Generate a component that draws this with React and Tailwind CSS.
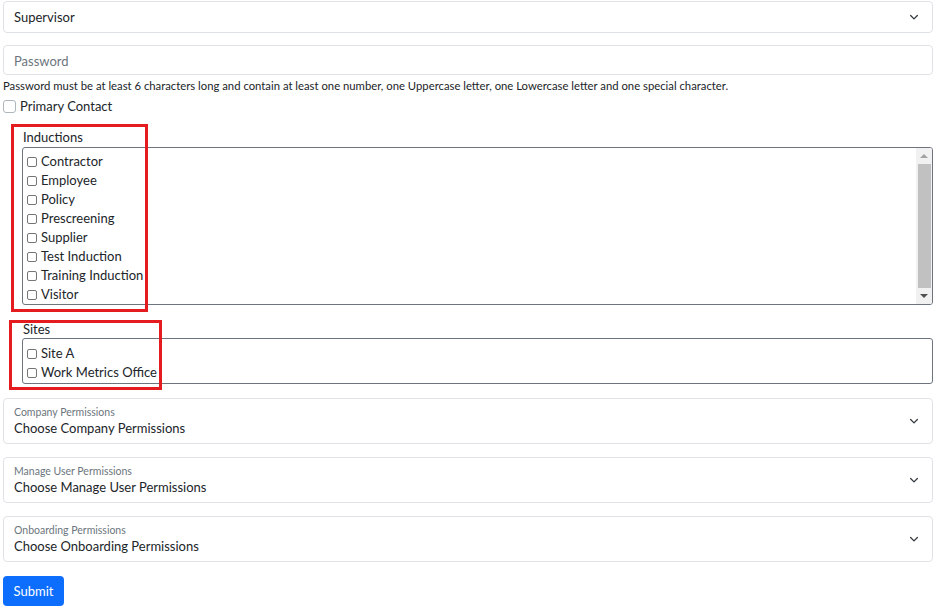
import React from "react";

const Chevron = () => (
  <svg width="12" height="12" viewBox="0 0 16 16" fill="none" stroke="#343a40" strokeWidth="1.7" strokeLinecap="round" strokeLinejoin="round">
    <path d="M3.5 6l4.5 4.5 4.5-4.5" />
  </svg>
);

const SmallBox = () => (
  <span className="inline-block w-[10px] h-[10px] border border-[#767676] rounded-[2px] bg-white mr-[4px] shrink-0" />
);

const CheckRow = ({ label }) => (
  <div className="flex items-center h-[19px] text-[13px] text-[#212529]">
    <SmallBox />
    <span>{label}</span>
  </div>
);

const PermSelect = ({ small, main, extra }) => (
  <div className={`h-[46px] border border-[#dee2e6] rounded-[4px] flex items-center justify-between pl-[10px] pr-[12px] ${extra}`}>
    <div className="flex flex-col">
      <span className="text-[10.5px] leading-[14px] text-[#6c757d]">{small}</span>
      <span className="text-[13px] leading-[18px] text-[#212529]">{main}</span>
    </div>
    <Chevron />
  </div>
);

export default function App() {
  const inductions = ["Contractor", "Employee", "Policy", "Prescreening", "Supplier", "Test Induction", "Training Induction", "Visitor"];
  return (
    <div className="relative w-[941px] h-[609px] bg-white px-[3px] pr-[8px] overflow-hidden" style={{ fontFamily: 'Lato, sans-serif' }}>
      <div className="pt-[1px]">
        <div className="h-[32px] border border-[#dee2e6] rounded-[4px] flex items-center justify-between pl-[10px] pr-[12px] text-[13px] text-[#212529]">
          <span className="pt-[2px]">Supervisor</span>
          <Chevron />
        </div>
        <div className="mt-[12px] h-[30px] border border-[#dee2e6] rounded-[4px] flex items-center pl-[10px] pt-[3px] text-[13px] text-[#6c757d]">
          Password
        </div>
        <div className="mt-[3px] text-[11.3px] leading-[16px] text-[#212529]">
          Password must be at least 6 characters long and contain at least one number, one Uppercase letter, one Lowercase letter and one special character.
        </div>
        <div className="mt-[2px] h-[20px] flex items-center text-[13px] text-[#212529]">
          <span className="inline-block w-[13px] h-[13px] border border-[#adb5bd] rounded-[3px] bg-white mr-[4px]" />
          <span className="pt-[1px]">Primary Contact</span>
        </div>

        <div className="ml-[20px] mt-[12px] h-[18px] leading-[18px] text-[13px] text-[#212529]">Inductions</div>
        <div className="ml-[19px] mt-[1px] h-[158px] border border-[#6c757d] rounded-[3px] flex overflow-hidden">
          <div className="flex-1 pl-[4px] pt-[4px]">
            {inductions.map((i) => (
              <CheckRow key={i} label={i} />
            ))}
          </div>
          <div className="w-[16px] bg-[#f1f1f1] flex flex-col items-center">
            <div className="h-[16px] flex items-center justify-center">
              <span className="w-0 h-0 border-l-[4px] border-r-[4px] border-b-[4px] border-l-transparent border-r-transparent border-b-[#a3a3a3]" />
            </div>
            <div className="w-[13px] flex-1 bg-[#c1c1c1]" />
            <div className="h-[16px] flex items-center justify-center">
              <span className="w-0 h-0 border-l-[4px] border-r-[4px] border-t-[4px] border-l-transparent border-r-transparent border-t-[#505050]" />
            </div>
          </div>
        </div>

        <div className="ml-[20px] mt-[15px] h-[18px] leading-[18px] text-[13px] text-[#212529]">Sites</div>
        <div className="ml-[19px] h-[46px] border border-[#6c757d] rounded-[3px] pl-[4px] pt-[5px]">
          <CheckRow label="Site A" />
          <CheckRow label="Work Metrics Office" />
        </div>

        <PermSelect small="Company Permissions" main="Choose Company Permissions" extra="mt-[14px]" />
        <PermSelect small="Manage User Permissions" main="Choose Manage User Permissions" extra="mt-[13px]" />
        <PermSelect small="Onboarding Permissions" main="Choose Onboarding Permissions" extra="mt-[13px]" />

        <button className="mt-[14px] h-[30px] w-[61px] pt-[2px] rounded-[4px] bg-[#0d6efd] text-white text-[13px]">Submit</button>
      </div>

      <div className="absolute left-[11px] top-[124px] w-[137px] h-[188px] border-[3px] border-[#e41b1f] pointer-events-none" />
      <div className="absolute left-[9px] top-[320px] w-[153px] h-[70px] border-[3px] border-[#e41b1f] pointer-events-none" />
    </div>
  );
}
